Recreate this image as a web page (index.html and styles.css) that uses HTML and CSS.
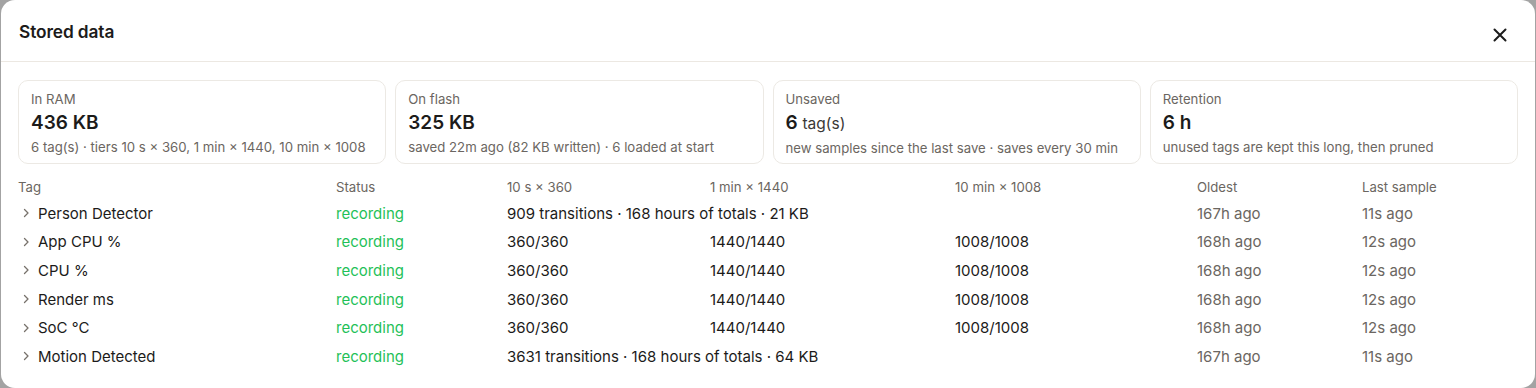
FILE: index.html
```html
<!DOCTYPE html>
<html lang="en">
<head>
    <meta charset="UTF-8">
    <meta name="viewport" content="width=device-width, initial-scale=1.0">
    <title>Stored data</title>
    <link rel="stylesheet" href="styles.css">
</head>
<body>
    <div class="modal">
        <div class="modal-header">
            <h1>Stored data</h1>
            <button class="close-btn" aria-label="Close">
                <svg width="14" height="14" viewBox="0 0 14 14"><path d="M1.5 1.5 L12.5 12.5 M12.5 1.5 L1.5 12.5" stroke="#1c1c1c" stroke-width="2" stroke-linecap="round"/></svg>
            </button>
        </div>
        <div class="modal-body">
            <div class="stats">
                <div class="stat">
                    <div class="stat-label">In RAM</div>
                    <div class="stat-value">436 KB</div>
                    <div class="stat-sub">6 tag(s) · tiers 10 s × 360, 1 min × 1440, 10 min × 1008</div>
                </div>
                <div class="stat">
                    <div class="stat-label">On flash</div>
                    <div class="stat-value">325 KB</div>
                    <div class="stat-sub">saved 22m ago (82 KB written) · 6 loaded at start</div>
                </div>
                <div class="stat">
                    <div class="stat-label">Unsaved</div>
                    <div class="stat-value">6 <span class="unit">tag(s)</span></div>
                    <div class="stat-sub">new samples since the last save · saves every 30 min</div>
                </div>
                <div class="stat">
                    <div class="stat-label">Retention</div>
                    <div class="stat-value">6 h</div>
                    <div class="stat-sub">unused tags are kept this long, then pruned</div>
                </div>
            </div>

            <table class="tags">
                <colgroup>
                    <col style="width: 318px">
                    <col style="width: 171px">
                    <col style="width: 203px">
                    <col style="width: 245px">
                    <col style="width: 242px">
                    <col style="width: 165px">
                    <col style="width: 156px">
                </colgroup>
                <thead>
                    <tr>
                        <th>Tag</th>
                        <th>Status</th>
                        <th>10 s × 360</th>
                        <th>1 min × 1440</th>
                        <th>10 min × 1008</th>
                        <th>Oldest</th>
                        <th>Last sample</th>
                    </tr>
                </thead>
                <tbody id="tagRows"></tbody>
            </table>
        </div>
    </div>

    <script>
        const tags = [
            { name: 'Person Detector', events: '909 transitions · 168 hours of totals · 21 KB', oldest: '167h ago', last: '11s ago' },
            { name: 'App CPU %', tiers: ['360/360', '1440/1440', '1008/1008'], oldest: '168h ago', last: '12s ago' },
            { name: 'CPU %', tiers: ['360/360', '1440/1440', '1008/1008'], oldest: '168h ago', last: '12s ago' },
            { name: 'Render ms', tiers: ['360/360', '1440/1440', '1008/1008'], oldest: '168h ago', last: '12s ago' },
            { name: 'SoC °C', tiers: ['360/360', '1440/1440', '1008/1008'], oldest: '168h ago', last: '12s ago' },
            { name: 'Motion Detected', events: '3631 transitions · 168 hours of totals · 64 KB', oldest: '167h ago', last: '11s ago' }
        ];

        const chevron = '<svg class="chevron" width="10" height="10" viewBox="0 0 10 10"><path d="M3.5 1.5 L7 5 L3.5 8.5" fill="none" stroke="#77716b" stroke-width="1.3" stroke-linecap="round" stroke-linejoin="round"/></svg>';
        const tbody = document.getElementById('tagRows');

        tags.forEach(tag => {
            const tr = document.createElement('tr');
            let middle;
            if (tag.events) {
                middle = `<td colspan="3">${tag.events}</td>`;
            } else {
                middle = tag.tiers.map(t => `<td>${t}</td>`).join('');
            }
            tr.innerHTML = `
                <td class="tag-name">${chevron}${tag.name}</td>
                <td class="status">recording</td>
                ${middle}
                <td class="muted">${tag.oldest}</td>
                <td class="muted">${tag.last}</td>
            `;
            tbody.appendChild(tr);
        });
    </script>
</body>
</html>
```

FILE: styles.css
```css
html, body {
    height: 100%;
}

body {
    margin: 0;
    background-color: #a3a3a3;
    font-family: Inter, "Noto Sans", sans-serif;
    color: #1c1b1a;
    overflow: hidden;
}

.modal {
    background-color: #ffffff;
    border-radius: 14px;
    height: 100%;
    margin: 0 1px;
    overflow: hidden;
}

.modal-header {
    display: flex;
    justify-content: space-between;
    align-items: center;
    height: 62px;
    padding: 0 28px 0 18px;
    border-bottom: 1px solid #ece8e2;
    box-sizing: border-box;
}

.modal-header h1 {
    margin: 0;
    font-size: 17.3px;
    font-weight: 600;
    letter-spacing: -0.1px;
    padding-top: 2px;
}

.close-btn {
    background: none;
    border: none;
    padding: 0;
    margin-top: 9px;
    cursor: pointer;
    display: flex;
}

.modal-body {
    padding: 18px 17px 0 17px;
}

.stats {
    display: grid;
    grid-template-columns: repeat(4, 1fr);
    gap: 9px;
}

.stat {
    border: 1px solid #ece9e4;
    border-radius: 10px;
    padding: 10px 12px 0 12px;
    height: 84px;
    box-sizing: border-box;
}

.stat-label {
    font-size: 13.2px;
    line-height: 16px;
    color: #6b6661;
}

.stat-value {
    font-size: 19px;
    font-weight: 600;
    line-height: 24px;
    margin-top: 4px;
}

.stat-value .unit {
    font-size: 15.5px;
    font-weight: 400;
    color: #3a3836;
}

.stat-sub {
    font-size: 13.2px;
    line-height: 16px;
    color: #6b6661;
    margin-top: 4px;
    white-space: nowrap;
}

.tags {
    width: 1500px;
    table-layout: fixed;
    border-collapse: collapse;
    margin-top: 11px;
}

.tags th {
    text-align: left;
    font-weight: 400;
    font-size: 13.2px;
    color: #6b6661;
    padding: 0;
    height: 24px;
}

.tags td {
    padding: 0;
    height: 28.6px;
    font-size: 15px;
    white-space: nowrap;
}

.tag-name {
    display: flex;
    align-items: center;
    gap: 7px;
    padding-left: 3px !important;
}

.chevron {
    flex-shrink: 0;
}

.status {
    color: #1fc158;
}

.muted {
    color: #6b6661;
}
```
